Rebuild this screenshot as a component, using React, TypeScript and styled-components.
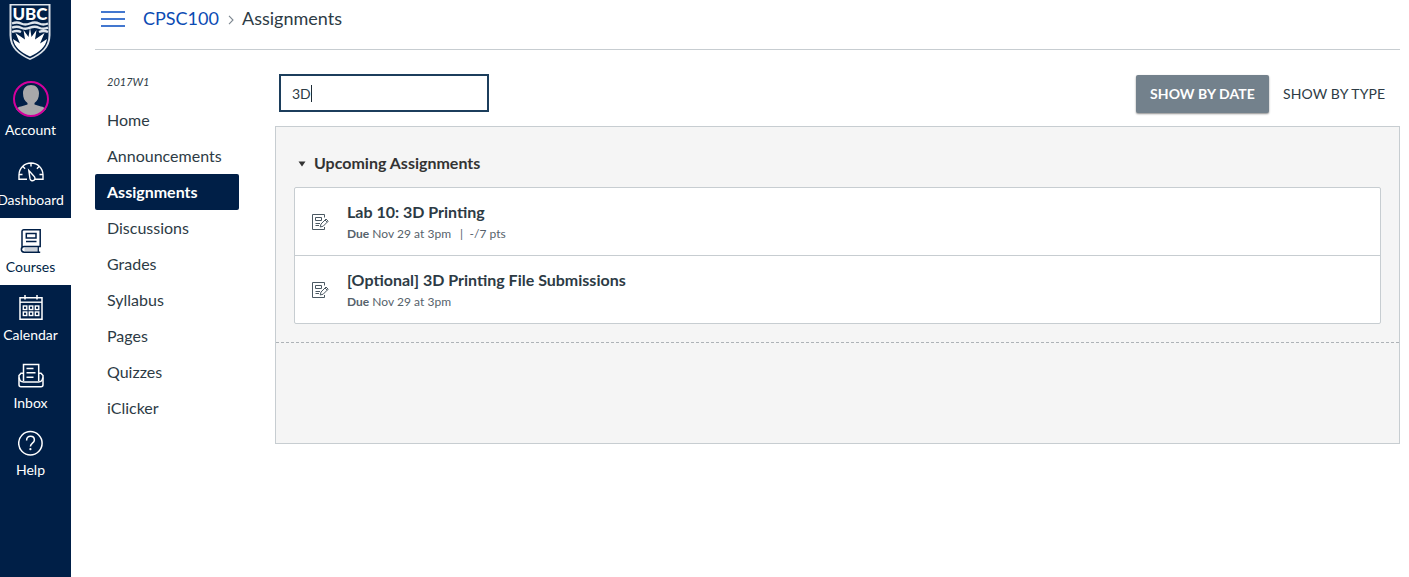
import React from "react";
import styled, { createGlobalStyle, css } from "styled-components";

const navy = "#001f47";

const GlobalStyle = createGlobalStyle`
  * { box-sizing: border-box; }
  body {
    margin: 0;
    background: #fff;
    color: #2d3b45;
    font-family: Lato, "Liberation Sans", sans-serif;
    overflow: hidden;
  }
`;

const Page = styled.div`
  display: flex;
  height: 577px;
`;

const GlobalNav = styled.nav`
  flex: 0 0 71px;
  background: ${navy};
  overflow: hidden;
`;

const NavInner = styled.div`
  width: 84px;
  margin-left: -11.5px;
  display: flex;
  flex-direction: column;
`;

const LogoLink = styled.a`
  display: flex;
  justify-content: center;
  height: 75px;
  padding: 3px 1px 0 0;
`;

const NavItem = styled.a<{ $active?: boolean; $account?: boolean }>`
  display: flex;
  flex-direction: column;
  align-items: center;
  justify-content: space-between;
  height: ${(p) => (p.$account ? 75.2 : 67.6)}px;
  padding: ${(p) => (p.$account ? "6px 0 11px" : "9px 0 9px")};
  color: ${(p) => (p.$active ? navy : "#fff")};
  background: ${(p) => (p.$active ? "#fff" : "transparent")};
`;

const NavLabel = styled.span`
  font-size: 14px;
  line-height: 18px;
  white-space: nowrap;
`;

const Main = styled.main`
  flex: 1;
  padding: 0 9px 0 24px;
`;

const TopBar = styled.header`
  display: flex;
  align-items: center;
  height: 50px;
  padding: 0 0 13px 6px;
  border-bottom: 1px solid #c7cdd1;
  font-size: 18px;
  line-height: 24px;
`;

const MenuButton = styled.span`
  display: flex;
  flex-direction: column;
  justify-content: space-between;
  width: 24px;
  height: 16px;
  margin: 1px 18px 0 0;
`;

const MenuLine = styled.span`
  height: 2px;
  background: #4377cf;
`;

const CourseLink = styled.a`
  color: #0b4bb3;
`;

const Separator = styled.svg`
  margin: 3px 8px 0 9px;
`;

const Body = styled.div`
  display: flex;
`;

const CourseNav = styled.nav`
  flex: 0 0 180px;
  padding-top: 22px;
`;

const Term = styled.div`
  height: 30px;
  padding-left: 12px;
  font-size: 11px;
  line-height: 19px;
  font-style: italic;
`;

const CourseItem = styled.a<{ $active?: boolean }>`
  display: block;
  width: 144px;
  height: 36px;
  padding-left: 12px;
  border-radius: 2px;
  font-size: 16px;
  line-height: 36px;
  ${(p) =>
    p.$active &&
    css`
      background: ${navy};
      color: #fff;
      font-weight: 700;
    `}
`;

const Content = styled.section`
  flex: 1;
`;

const Toolbar = styled.div`
  display: flex;
  align-items: flex-start;
  justify-content: space-between;
  height: 76px;
  padding: 24px 14px 0 4px;
`;

const SearchBox = styled.div`
  display: flex;
  align-items: center;
  width: 210px;
  height: 38px;
  padding-left: 11px;
  border: 2px solid #1c3e5c;
  font-size: 14px;
`;

const Caret = styled.span`
  width: 1px;
  height: 17px;
  background: #1d2c36;
`;

const Toggle = styled.div`
  display: flex;
  align-items: center;
  padding-top: 1px;
`;

const ToggleButton = styled.span<{ $on?: boolean }>`
  height: 38px;
  line-height: 38px;
  font-size: 14px;
  white-space: nowrap;
  ${(p) =>
    p.$on
      ? css`
          width: 133px;
          margin-right: 14px;
          padding-left: 14px;
          background: #73818c;
          color: #fff;
          font-weight: 700;
          letter-spacing: 0.08px;
          border-radius: 2px;
          box-shadow: 0 1px 2px rgba(0, 0, 0, 0.45);
        `
      : css`
          width: 103px;
          letter-spacing: 0.12px;
        `}
`;

const Panel = styled.div`
  height: 318px;
  border: 1px solid #c7cdd1;
  background: #f5f5f5;
`;

const Group = styled.div`
  height: 216px;
  padding: 23px 18px 0;
  border-bottom: 1px dashed #aeb3b7;
`;

const GroupTitle = styled.h2`
  display: flex;
  align-items: center;
  gap: 8px;
  height: 24px;
  margin: 0 0 13px;
  padding-left: 4px;
  font-size: 16px;
  font-weight: 700;
  color: #333;
`;

const Disclosure = styled.svg`
  margin-top: 3px;
`;

const List = styled.div`
  border: 1px solid #c7cdd1;
  border-radius: 2px;
  background: #fff;
`;

const Row = styled.div`
  display: flex;
  height: 67px;
  padding: 12px 0 0 17px;
  & + & {
    height: 68px;
    border-top: 1px solid #c7cdd1;
  }
`;

const RowIcon = styled.svg`
  margin: 14px 18px 0 0;
`;

const RowTitle = styled.div`
  font-size: 16px;
  line-height: 23px;
  margin-bottom: 1px;
  font-weight: 700;
`;

const Meta = styled.div`
  display: flex;
  font-size: 12px;
  line-height: 20px;
  letter-spacing: 0.02px;
  color: #56626b;
  white-space: pre;
`;

const Divider = styled.span`
  margin: 0 6.5px 0 9px;
`;

const Crest = () => (
  <svg width="42" height="58" viewBox="0 0 42 58" fill="none">
    <path d="M.5 1h41v31c0 13-9 20-20.500 25C9.500 52 .5 45 .5 32z" fill="#dfe5ec" />
    <path d="M2.500 2.500h37v30c0 11.500-8 18-18.500 22.800C10.500 50.500 2.500 44 2.500 32.500z" fill={navy} />
    <text x="21" y="17" textAnchor="middle" fontFamily="Lato, sans-serif" fontSize="17" fontWeight="900" fill="#fff" textLength="35" lengthAdjust="spacingAndGlyphs">UBC</text>
    <g stroke="#dfe5ec" strokeWidth="2.400">
      <path d="M3 20.500q5-2 9 0t9 0 9 0 9 0M3 24.700q5-2 9 0t9 0 9 0 9 0M3 29q5-2 9 0M30 29q5-2 9 0" />
    </g>
    <path d="M21 53.500C11 49 5.500 44 4 36l7 4.500L6.500 30l9.500 6.500L14.500 27l5 7L21 24.500l1.500 9.500 5-7-1.500 9.500 9.500-6.500L31 40.500l7-4.500c-1.500 8-7 13-17 17.500z" fill="#fff" />
  </svg>
);

const Avatar = () => (
  <svg width="36" height="36" viewBox="0 0 36 36">
    <circle cx="18" cy="18" r="17" fill={navy} />
    <path d="M18 4c-4.800 0-8 3.500-8 8.200 0 4.800 1.700 7.800 4.500 9.800v1.500C10.500 25 5 25.500 3 28 7 33 13 35 18 35s11-2 15-7c-2-2.500-7.500-3-11.500-4.500V22c2.800-2 4.500-5 4.500-9.800C26 7.500 22.800 4 18 4z" fill="#a8a8aa" />
    <circle cx="18" cy="18" r="17" fill="none" stroke="#d3009c" strokeWidth="2" />
  </svg>
);

const DashboardIcon = () => (
  <svg width="26" height="26" viewBox="0 0 26 26" fill="none" stroke="currentColor" strokeWidth="1.400">
    <path d="M9 20.300H1V16a12 12 0 0 1 24 0v4.300H17M13 4v3.500M5.200 7.800l1.900 1.900M20.800 7.800l-1.900 1.900M1.500 15.500h3M21.500 15.500h3" />
    <path d="M10.800 11.500l5.200 5.800a2.500 2.500 0 1 1-4 2.400z" />
  </svg>
);

const CoursesIcon = () => (
  <svg width="22" height="26" viewBox="0 0 22 26" fill="none" stroke="currentColor" strokeWidth="1.500">
    <path d="M2 21.500V4.500A1.800 1.800 0 0 1 3.800 2.700h16.400v16.800H4.200a2.600 2.600 0 0 0 0 5.700h16" />
    <path d="M4.500 20.500h13.500v4H4.500z" fill="currentColor" fillOpacity="0.200" stroke="none" />
    <path d="M18.300 19.500v5.500" strokeWidth="1.300" />
    <path d="M6.300 6.500h9.700v4.500H6.300zM6 14.500h10.500" strokeWidth="1.500" />
  </svg>
);

const CalendarIcon = () => (
  <svg width="24" height="26" viewBox="0 0 24 26" fill="none" stroke="currentColor">
    <path d="M1 3.700h22v21.600H1zM6 1v4.500M18 1v4.500" strokeWidth="1.500" />
    <path d="M1 8.200h22" strokeWidth="1.400" />
    {[4.3, 10.3, 16.3].map((x) =>
      [12, 18].map((y) => <rect key={`${x}-${y}`} x={x} y={y} width="3.500" height="3.500" strokeWidth="1.400" />)
    )}
  </svg>
);

const InboxIcon = () => (
  <svg width="26" height="26" viewBox="0 0 26 26" fill="none" stroke="currentColor" strokeWidth="1.500">
    <path d="M5.500 19V2.500h15.200V19M5.500 11.300H3L1 13.500v9.300a2 2 0 0 0 2 2h20a2 2 0 0 0 2-2v-9.300l-2-2.200h-2.300" />
    <path d="M1.200 15.500q.5 4.500 4.300 4.500h15q3.800 0 4.300-4.500M8.500 6.500h7M8.500 10.800h9M8.500 15.200h7" />
  </svg>
);

const HelpIcon = () => (
  <svg width="26" height="26" viewBox="0 0 26 26" fill="none" stroke="currentColor" strokeWidth="1.500">
    <circle cx="12.400" cy="13.200" r="11.700" />
    <path d="M8.600 10.400c0-2.600 1.600-4.200 3.900-4.200s3.900 1.500 3.900 3.700c0 3.300-4 3.200-4 6.600" />
    <circle cx="12.400" cy="19.200" r="1.100" fill="currentColor" stroke="none" />
  </svg>
);

const AssignmentIcon = () => (
  <RowIcon width="17" height="17" viewBox="0 0 17 17" fill="none" stroke="#4b5963">
    <path d="M12.500 3.500v-3H.5v15h12v-2.500" />
    <path d="M3.500 3.500h6v3h-6zM3.500 9.500H8M3.500 11.500H7" />
    <path d="M8.200 13l.8-3 5-5 2.200 2.200-5 5zM13 6l2.200 2.200" />
  </RowIcon>
);

const globalItems = [
  { label: "Dashboard", Icon: DashboardIcon },
  { label: "Courses", Icon: CoursesIcon, active: true },
  { label: "Calendar", Icon: CalendarIcon },
  { label: "Inbox", Icon: InboxIcon },
  { label: "Help", Icon: HelpIcon },
];

const courseItems = ["Home", "Announcements", "Assignments", "Discussions", "Grades", "Syllabus", "Pages", "Quizzes", "iClicker"];

export default function App() {
  return (
    <>
      <GlobalStyle />
      <Page>
        <GlobalNav>
          <NavInner>
            <LogoLink><Crest /></LogoLink>
            <NavItem $account>
              <Avatar />
              <NavLabel>Account</NavLabel>
            </NavItem>
            {globalItems.map(({ label, Icon, active }) => (
              <NavItem key={label} $active={active}>
                <Icon />
                <NavLabel>{label}</NavLabel>
              </NavItem>
            ))}
          </NavInner>
        </GlobalNav>
        <Main>
          <TopBar>
            <MenuButton><MenuLine /><MenuLine /><MenuLine /></MenuButton>
            <CourseLink>CPSC100</CourseLink>
            <Separator width="6" height="10" viewBox="0 0 6 10" fill="none" stroke="#7d8790" strokeWidth="1.100">
              <path d="M1 .8 5 5 1 9.200" />
            </Separator>
            <span>Assignments</span>
          </TopBar>
          <Body>
            <CourseNav>
              <Term>2017W1</Term>
              {courseItems.map((name) => (
                <CourseItem key={name} $active={name === "Assignments"}>{name}</CourseItem>
              ))}
            </CourseNav>
            <Content>
              <Toolbar>
                <SearchBox><span>3D</span><Caret /></SearchBox>
                <Toggle>
                  <ToggleButton $on>SHOW BY DATE</ToggleButton>
                  <ToggleButton>SHOW BY TYPE</ToggleButton>
                </Toggle>
              </Toolbar>
              <Panel>
                <Group>
                  <GroupTitle>
                    <Disclosure width="8" height="6" viewBox="0 0 8 6"><path d="M.5 .5h7L4 5.500z" fill="#333" /></Disclosure>
                    Upcoming Assignments
                  </GroupTitle>
                  <List>
                    <Row>
                      <AssignmentIcon />
                      <div>
                        <RowTitle>Lab 10: 3D Printing</RowTitle>
                        <Meta><b>Due</b> Nov 29 at 3pm<Divider>|</Divider>-/7 pts</Meta>
                      </div>
                    </Row>
                    <Row>
                      <AssignmentIcon />
                      <div>
                        <RowTitle>[Optional] 3D Printing File Submissions</RowTitle>
                        <Meta><b>Due</b> Nov 29 at 3pm</Meta>
                      </div>
                    </Row>
                  </List>
                </Group>
              </Panel>
            </Content>
          </Body>
        </Main>
      </Page>
    </>
  );
}
